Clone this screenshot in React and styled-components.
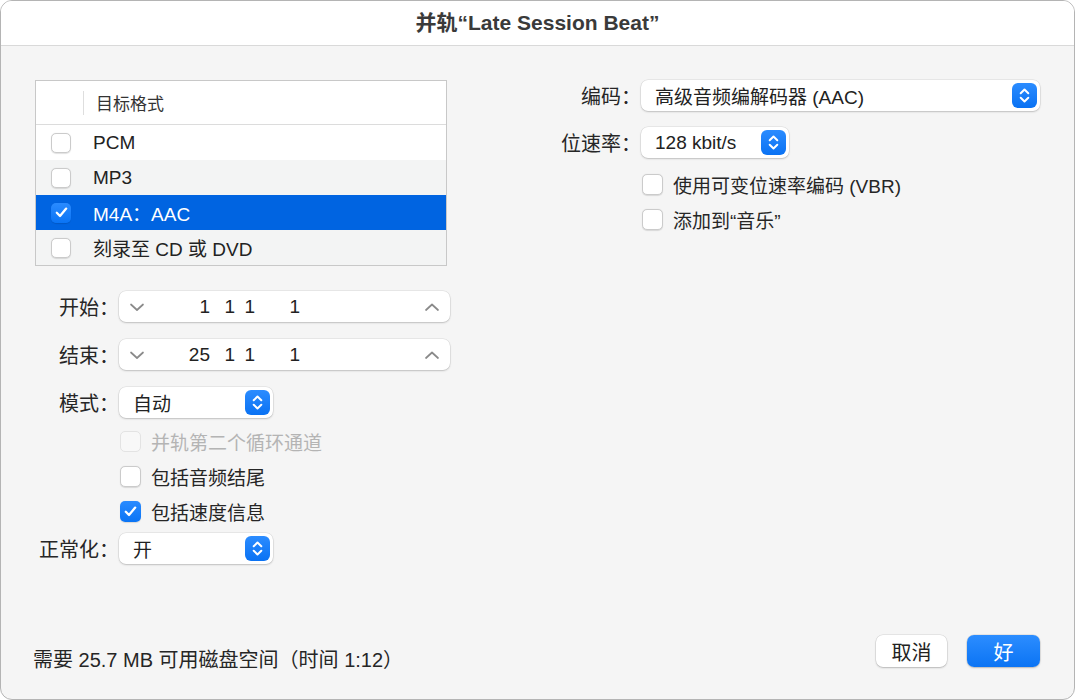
import React from "react";
import styled, { createGlobalStyle } from "styled-components";

const GlobalStyle = createGlobalStyle`
  html, body {
    margin: 0;
    padding: 0;
    background: #ffffff;
  }
  body {
    font-family: "Liberation Sans", "Noto Sans CJK SC", sans-serif;
    color: #222;
  }
`;

const Window = styled.div`
  width: 1075px;
  height: 700px;
  box-sizing: border-box;
  border: 1px solid #b4b4b4;
  border-radius: 12px;
  overflow: hidden;
  display: flex;
  flex-direction: column;
  background: #f5f5f5;
`;

const TitleBar = styled.div`
  height: 45px;
  flex: none;
  box-sizing: border-box;
  padding-bottom: 4px;
  background: #fff;
  border-bottom: 1px solid #d9d9d9;
  display: flex;
  align-items: center;
  justify-content: center;
  font-size: 21px;
  font-weight: 700;
  color: #3a3a3a;
`;

const Content = styled.div`
  flex: 1;
  display: grid;
  grid-template-columns: 415px 1fr;
  padding: 34px 35px 0 34px;
  align-items: start;
`;

const Column = styled.div`
  display: flex;
  flex-direction: column;
`;

const Table = styled.div`
  width: 412px;
  box-sizing: border-box;
  border: 1px solid #c8c8c8;
  background: #fff;
  margin-bottom: 25px;
`;

const TableHeader = styled.div`
  height: 43px;
  border-bottom: 1px solid #dcdcdc;
  display: flex;
  align-items: center;
  font-size: 17px;
  color: #333;
`;

const HeaderCheckCol = styled.div`
  width: 47px;
  height: 24px;
  border-right: 1px solid #dedede;
`;

const HeaderTitle = styled.div`
  padding-left: 12px;
`;

const TableRow = styled.div`
  height: 35px;
  display: flex;
  align-items: center;
  padding-left: 15px;
  gap: 22px;
  font-size: 19px;
  background: ${(p) => (p.$selected ? "#0064e1" : p.$odd ? "#f3f4f4" : "#fff")};
  color: ${(p) => (p.$selected ? "#fff" : "#222")};
`;

const Box = styled.span`
  width: ${(p) => p.$size || 21}px;
  height: ${(p) => p.$size || 21}px;
  box-sizing: border-box;
  flex: none;
  border-radius: 5px;
  display: flex;
  align-items: center;
  justify-content: center;
  background: ${(p) =>
    p.$checked ? "linear-gradient(#2a8bff, #0a74f5)" : p.$disabled ? "#f8f8f8" : "#fff"};
  border: ${(p) =>
    p.$checked ? "none" : p.$disabled ? "1px solid #e3e3e3" : "1px solid #cbcbcb"};
  box-shadow: ${(p) => (p.$disabled ? "none" : "0 0.5px 1px rgba(0,0,0,0.12)")};
`;

const FormRow = styled.div`
  display: flex;
  align-items: center;
  margin-top: ${(p) => p.$mt ?? 0}px;
  margin-bottom: ${(p) => p.$mb ?? 17}px;
`;

const Label = styled.div`
  width: ${(p) => p.$w}px;
  flex: none;
  text-align: right;
  font-size: 20px;
  color: #262626;
  white-space: nowrap;
`;

const Field = styled.div`
  width: ${(p) => p.$w}px;
  height: 31px;
  box-sizing: border-box;
  background: #fff;
  border-radius: 7px;
  box-shadow: 0 0 0 0.5px rgba(0, 0, 0, 0.1), 0 1px 2px rgba(0, 0, 0, 0.18);
  display: flex;
  align-items: center;
  font-size: 19px;
  color: #222;
`;

const StepField = styled(Field)`
  display: grid;
  grid-template-columns: 36px 55px 25px 20px 45px 1fr 36px;
  align-items: center;
`;

const Cell = styled.span`
  display: flex;
  justify-content: ${(p) => (p.$center ? "center" : "flex-end")};
`;

const SelectText = styled.span`
  flex: 1;
  padding-left: 14px;
  white-space: nowrap;
`;

const Stepper = styled.span`
  width: 25px;
  height: 25px;
  margin-right: 3px;
  flex: none;
  border-radius: 6px;
  background: linear-gradient(#2b8cff, #0a72f3);
  display: flex;
  align-items: center;
  justify-content: center;
`;

const CheckRow = styled.label`
  height: 35px;
  display: flex;
  align-items: center;
  gap: 10px;
  padding-left: ${(p) => p.$indent}px;
  font-size: 19px;
  color: ${(p) => (p.$disabled ? "#b4b4b4" : "#262626")};
`;

const Footer = styled.div`
  flex: none;
  display: flex;
  justify-content: space-between;
  align-items: flex-start;
  padding: 0 34px 26px 32px;
`;

const FooterText = styled.div`
  font-size: 20px;
  color: #262626;
  margin-top: 9px;
`;

const Buttons = styled.div`
  display: flex;
  gap: 20px;
`;

const Button = styled.button`
  height: 32px;
  width: ${(p) => p.$w}px;
  border: none;
  border-radius: 7px;
  font-family: inherit;
  font-size: 20px;
  padding: 0;
  color: ${(p) => (p.$primary ? "#fff" : "#222")};
  background: ${(p) => (p.$primary ? "linear-gradient(#2c8dff, #0b74f4)" : "#fff")};
  box-shadow: 0 0 0 0.5px rgba(0, 0, 0, 0.12), 0 1px 2px rgba(0, 0, 0, 0.2);
`;

const Check = () => (
  <svg width="15" height="15" viewBox="0 0 15 15">
    <path d="M2.8 7.8 L6 11 L12.2 3.6" fill="none" stroke="#fff" strokeWidth="2.3" strokeLinecap="round" strokeLinejoin="round" />
  </svg>
);

const Checkbox = ({ checked, disabled, size }) => (
  <Box $checked={checked} $disabled={disabled} $size={size}>
    {checked && <Check />}
  </Box>
);

const UpDown = () => (
  <svg width="25" height="25" viewBox="0 0 25 25">
    <path d="M8.7 10.2 L12.5 6.6 L16.3 10.2 M8.7 14.8 L12.5 18.4 L16.3 14.8" fill="none" stroke="#fff" strokeWidth="2" strokeLinecap="round" strokeLinejoin="round" />
  </svg>
);

const Chevron = ({ up }) => (
  <svg width="16" height="10" viewBox="0 0 16 10">
    <path d={up ? "M2 8 L8 2.5 L14 8" : "M2 2.5 L8 8 L14 2.5"} fill="none" stroke="#8a8a8a" strokeWidth="1.7" strokeLinecap="round" strokeLinejoin="round" />
  </svg>
);

const Select = ({ w, children }) => (
  <Field $w={w}>
    <SelectText>{children}</SelectText>
    <Stepper>
      <UpDown />
    </Stepper>
  </Field>
);

const Position = ({ values }) => (
  <StepField $w={331}>
    <Cell $center>
      <Chevron />
    </Cell>
    {values.map((v, i) => (
      <Cell key={i}>{v}</Cell>
    ))}
    <span />
    <Cell $center>
      <Chevron up />
    </Cell>
  </StepField>
);

const formats = [
  { name: "PCM" },
  { name: "MP3" },
  { name: "M4A：AAC", selected: true },
  { name: "刻录至 CD 或 DVD" },
];

export default function App() {
  return (
    <>
      <GlobalStyle />
      <Window>
        <TitleBar>并轨“Late Session Beat”</TitleBar>
        <Content>
          <Column>
            <Table>
              <TableHeader>
                <HeaderCheckCol />
                <HeaderTitle>目标格式</HeaderTitle>
              </TableHeader>
              {formats.map((f, i) => (
                <TableRow key={f.name} $odd={i % 2 === 1} $selected={f.selected}>
                  <Checkbox checked={f.selected} size={20} />
                  {f.name}
                </TableRow>
              ))}
            </Table>
            <FormRow>
              <Label $w={84}>开始：</Label>
              <Position values={["1", "1", "1", "1"]} />
            </FormRow>
            <FormRow>
              <Label $w={84}>结束：</Label>
              <Position values={["25", "1", "1", "1"]} />
            </FormRow>
            <FormRow $mb={6}>
              <Label $w={84}>模式：</Label>
              <Select w={154}>自动</Select>
            </FormRow>
            <CheckRow $indent={85} $disabled>
              <Checkbox disabled />
              并轨第二个循环通道
            </CheckRow>
            <CheckRow $indent={85}>
              <Checkbox />
              包括音频结尾
            </CheckRow>
            <CheckRow $indent={85}>
              <Checkbox checked />
              包括速度信息
            </CheckRow>
            <FormRow $mt={4} $mb={0}>
              <Label $w={84}>正常化：</Label>
              <Select w={154}>开</Select>
            </FormRow>
          </Column>
          <Column>
            <FormRow $mb={16}>
              <Label $w={191}>编码：</Label>
              <Select w={399}>高级音频编解码器 (AAC)</Select>
            </FormRow>
            <FormRow $mb={9}>
              <Label $w={191}>位速率：</Label>
              <Select w={148}>128 kbit/s</Select>
            </FormRow>
            <CheckRow $indent={192}>
              <Checkbox />
              使用可变位速率编码 (VBR)
            </CheckRow>
            <CheckRow $indent={192}>
              <Checkbox />
              添加到“音乐”
            </CheckRow>
          </Column>
        </Content>
        <Footer>
          <FooterText>需要 25.7 MB 可用磁盘空间（时间 1:12）</FooterText>
          <Buttons>
            <Button $w={71}>取消</Button>
            <Button $w={73} $primary>
              好
            </Button>
          </Buttons>
        </Footer>
      </Window>
    </>
  );
}
